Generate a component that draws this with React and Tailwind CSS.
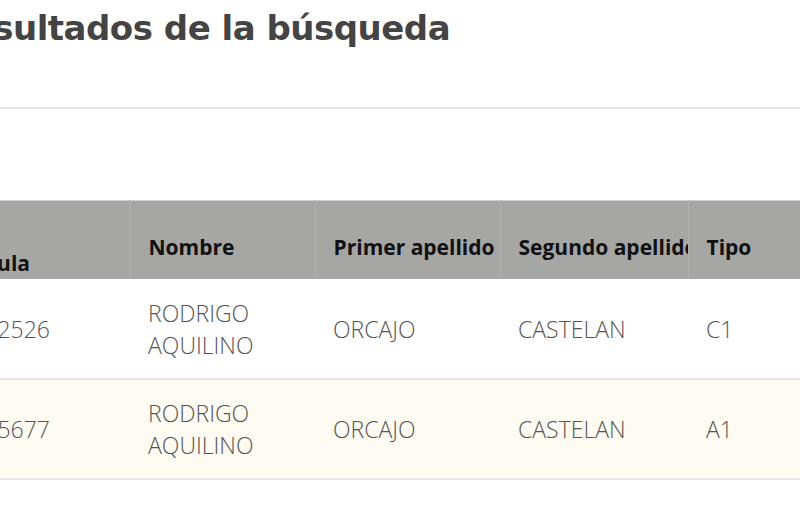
const rows = [
  { cedula: '1062526', nombre: ['RODRIGO', 'AQUILINO'], primer: 'ORCAJO', segundo: 'CASTELAN', tipo: 'C1', bg: 'bg-white' },
  { cedula: '1075677', nombre: ['RODRIGO', 'AQUILINO'], primer: 'ORCAJO', segundo: 'CASTELAN', tipo: 'A1', bg: 'bg-[#fdfbf2]' },
]

const th = 'text-left align-middle pl-[18px] pr-0 pt-[14px] text-[21px] leading-[32px] font-bold text-[#111] whitespace-nowrap overflow-hidden'
const td = 'pl-[18px] align-middle text-[23px] leading-[32px] font-light text-[#555]'

export default function App() {
  return (
    <div className="w-[800px] h-[505px] overflow-hidden bg-white">
      {/* Title */}
      <div className="pt-[6px] ml-[-55px]">
        <h1 className="text-[34px] leading-[44px] font-semibold text-[#444] font-['DejaVu_Sans',sans-serif] tracking-[-0.5px] whitespace-nowrap">
          Resultados de la búsqueda
        </h1>
      </div>
      <div className="mt-[57px] h-[2px] bg-[#e4e4e4]" />

      {/* Table */}
      <div className="mt-[91px] ml-[-60px] font-['Open_Sans',sans-serif]">
        <table className="table-fixed border-collapse w-[960px]">
          <colgroup>
            <col className="w-[190px]" />
            <col className="w-[185px]" />
            <col className="w-[185px]" />
            <col className="w-[188px]" />
            <col className="w-[212px]" />
          </colgroup>
          <thead>
            <tr className="bg-[#a6a6a5] h-[78px] border-t border-[#cfcfcf]">
              <th className={`${th} border-r border-[#b0b0af]`}>
                <span className="opacity-0">No.</span>
                <br />
                Cédula
              </th>
              <th className={`${th} border-r border-[#b0b0af]`}>Nombre</th>
              <th className={`${th} border-r border-[#b0b0af]`}>Primer apellido</th>
              <th className={`${th} border-r border-[#b0b0af]`}>Segundo apellido</th>
              <th className={th}>Tipo</th>
            </tr>
          </thead>
          <tbody>
            {rows.map((r) => (
              <tr key={r.cedula} className={`${r.bg} h-[100px] border-b-2 border-[#e6e6e6]`}>
                <td className={td}>{r.cedula}</td>
                <td className={td}>
                  {r.nombre[0]}
                  <br />
                  {r.nombre[1]}
                </td>
                <td className={td}>{r.primer}</td>
                <td className={td}>{r.segundo}</td>
                <td className={td}>{r.tipo}</td>
              </tr>
            ))}
          </tbody>
        </table>
      </div>
    </div>
  )
}
